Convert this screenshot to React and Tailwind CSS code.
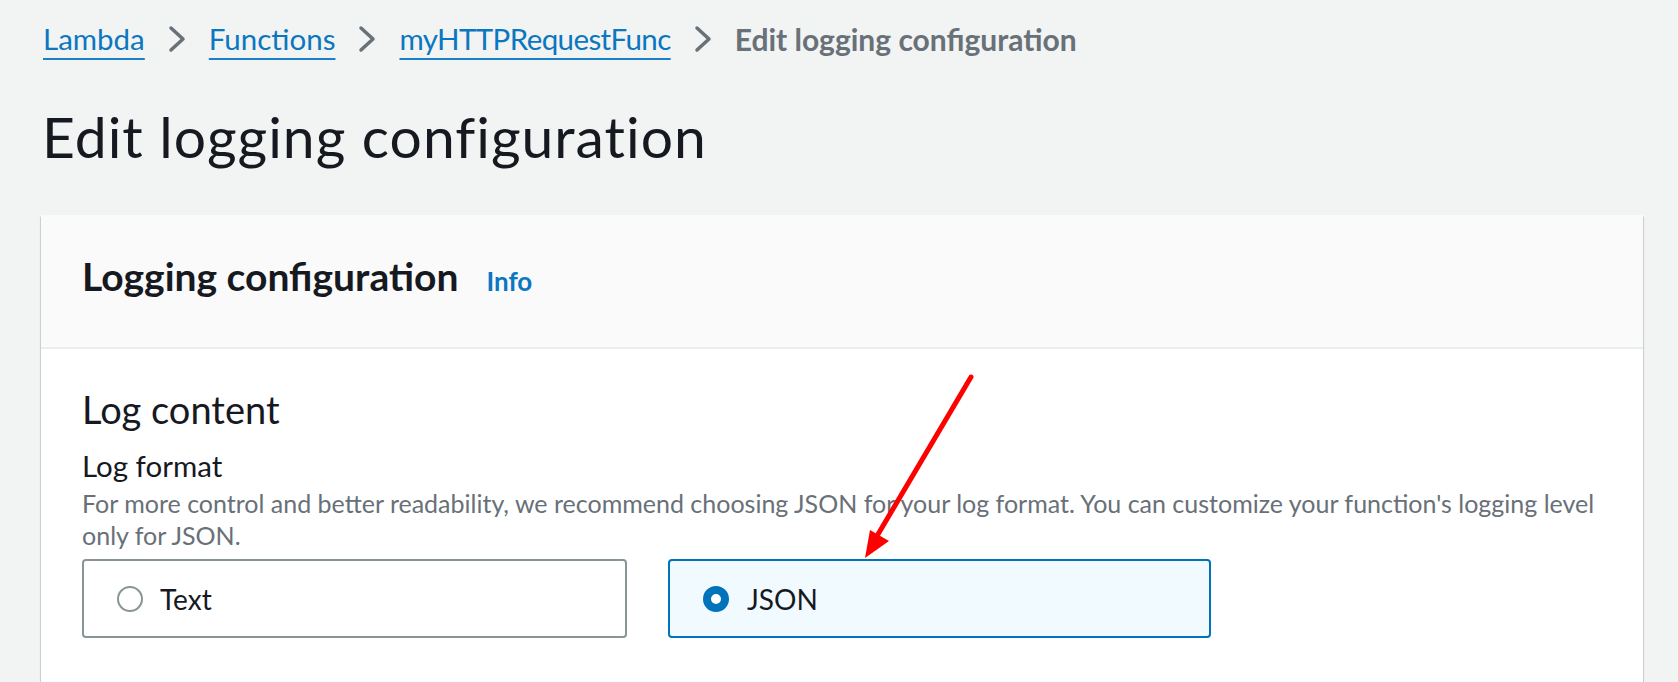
import React from "react";

const font = { fontFamily: "Lato, 'Open Sans', sans-serif" };

function Chevron() {
  return (
    <svg width="18" height="28" viewBox="0 0 18 28" className="mx-[23px] shrink-0" aria-hidden="true">
      <polyline points="3,3 15,14 3,25" fill="none" stroke="#687078" strokeWidth="3.5" strokeLinecap="round" strokeLinejoin="round" />
    </svg>
  );
}

function Crumb({ children, className = "" }) {
  return (
    <a className={"text-[#0a77c0] underline decoration-2 underline-offset-[8px] decoration-[#1a80c8] " + className}>{children}</a>
  );
}

function Radio({ checked }) {
  if (checked) {
    return <span className="w-[26px] h-[26px] rounded-full border-[8px] border-[#0073bb] bg-white shrink-0" />;
  }
  return <span className="w-[26px] h-[26px] rounded-full border-2 border-[#879596] bg-white shrink-0" />;
}

export default function App() {
  return (
    <div className="relative w-full h-[682px] overflow-hidden bg-[#f2f3f3] text-[#16191f]" style={font}>
      <div className="pl-[41px] pr-[35px]">
        <nav className="flex items-center pt-[17px] h-[61px] text-[29.5px] leading-[44px]">
          <span className="pl-[2px]"><Crumb>Lambda</Crumb></span>
          <Chevron />
          <Crumb>Functions</Crumb>
          <Chevron />
          <Crumb className="tracking-[-0.6px]">myHTTPRequestFunc</Crumb>
          <Chevron />
          <span className="font-bold text-[30px] text-[#687078]">Edit logging configuration</span>
        </nav>
        <h1 className="mt-[42px] text-[57px] leading-[67px] tracking-[1px] font-normal pl-[1px]">Edit logging configuration</h1>
        <div className="mt-[45px] w-[1602px] h-[500px] bg-white rounded-[2px] shadow-[0_1px_1px_0_rgba(0,28,36,0.3),1px_1px_1px_0_rgba(0,28,36,0.15),-1px_1px_1px_0_rgba(0,28,36,0.15)]">
          <div className="bg-[#fafafa] border-b-2 border-[#eaeded] pt-[39px] pb-[46px] px-[41px] flex items-baseline gap-[28px]">
            <h2 className="text-[39px] leading-[44px] font-bold">Logging configuration</h2>
            <a className="text-[26px] font-bold text-[#0a77c0]">Info</a>
          </div>
          <div className="px-[41px] pt-[38px]">
            <h3 className="text-[38px] leading-[44px] font-normal">Log content</h3>
            <div className="mt-[18px] text-[29.5px] leading-[34px]">Log format</div>
            <p className="mt-[4px] text-[25px] leading-[32px] text-[#687078] whitespace-nowrap">
              For more control and better readability, we recommend choosing JSON for your log format. You can customize your function's logging level
              <br />
              only for JSON.
            </p>
            <div className="mt-[8px] flex gap-[41px]">
              <label className="w-[545px] h-[79px] border-2 border-[#879596] rounded-[4px] flex items-center pl-[33px] gap-[17px] text-[28px]">
                <Radio checked={false} />
                <span>Text</span>
              </label>
              <label className="w-[543px] h-[79px] border-2 border-[#0073bb] bg-[#f1faff] rounded-[4px] flex items-center pl-[33px] gap-[18px] text-[28px]">
                <Radio checked={true} />
                <span>JSON</span>
              </label>
            </div>
          </div>
        </div>
      </div>
      <svg className="absolute left-0 top-0 pointer-events-none" width="1678" height="682" aria-hidden="true">
        <line x1="971" y1="377" x2="877" y2="536" stroke="#ff0000" strokeWidth="5" strokeLinecap="round" />
        <polygon points="865,558 870,530 889,541" fill="#ff0000" />
      </svg>
    </div>
  );
}
